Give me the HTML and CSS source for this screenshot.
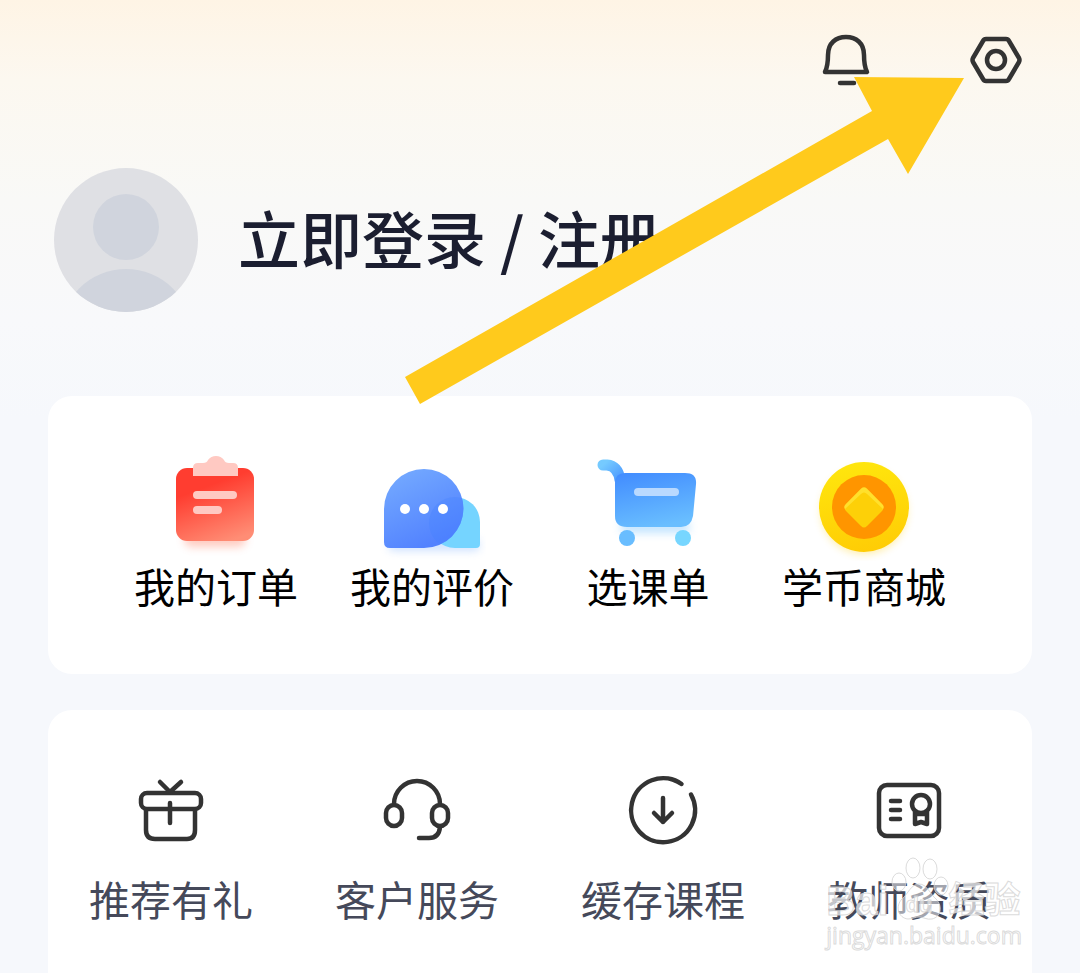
FILE: index.html
```html
<!DOCTYPE html>
<html lang="zh-CN">
  <head>
    <meta charset="utf-8">
    <meta name="viewport" content="width=device-width, initial-scale=1.0">

    <title>我的</title>

    <link rel="stylesheet" href="styles.css">
  </head>

  <body>
    <!-- Top bar -->
    <header class="top-bar">
      <button class="icon-button" type="button" aria-label="消息">
        <svg class="line-icon" width="60" height="60" viewBox="0 0 60 60">
          <path d="M9 42 Q12 36 12 25 C12 13 20 7 30 7 S48 13 48 25 Q48 36 51 42 Z"/>
          <path d="M24 53 H38"/>
        </svg>
      </button>
      <button class="icon-button" type="button" aria-label="设置">
        <svg class="line-icon" width="60" height="60" viewBox="0 0 60 60">
          <path d="M20 9 H40 Q42 9 43 11 L53 28 Q54 30 53 32 L43 49 Q42 51 40 51 H20 Q18 51 17 49 L7 32 Q6 30 7 28 L17 11 Q18 9 20 9 Z"/>
          <circle cx="30" cy="30" r="9"/>
        </svg>
      </button>
    </header>

    <!-- Login -->
    <a class="profile" href="#">
      <svg class="avatar" width="144" height="144" viewBox="0 0 144 144">
        <defs>
          <clipPath id="avatarClip"><circle cx="72" cy="72" r="72"/></clipPath>
        </defs>
        <g clip-path="url(#avatarClip)">
          <rect width="144" height="144" fill="#dfe0e4"/>
          <circle cx="72" cy="59" r="33" fill="#d0d4dd"/>
          <circle cx="72" cy="167" r="66" fill="#d0d4dd"/>
        </g>
      </svg>
      <span class="login-text">立即登录 / 注册</span>
    </a>

    <main class="cards">
      <!-- Orders, reviews, cart, coins -->
      <nav class="card main-menu">
        <a class="menu-item" href="#">
          <svg width="108" height="108" viewBox="0 0 108 108">
            <defs>
              <linearGradient id="red" x1="0.3" y1="0" x2="0.7" y2="1">
                <stop offset="0.25" stop-color="#ff3d30"/>
                <stop offset="1" stop-color="#ff8d75"/>
              </linearGradient>
              <filter id="soft" x="-20%" y="-100%" width="140%" height="300%">
                <feGaussianBlur stdDeviation="4"/>
              </filter>
            </defs>
            <rect x="22" y="78" width="62" height="16" rx="8" fill="#ff8d75" opacity="0.45" filter="url(#soft)"/>
            <rect x="14" y="15" width="78" height="73" rx="11" fill="url(#red)"/>
            <path d="M31 23 V15 Q31 10 36 10 H41 Q45 10 46 7 Q49 3 54 3 T62 7 Q63 10 67 10 H71 Q76 10 76 15 V23 Z" fill="#ffc9c2"/>
            <rect x="31" y="38" width="44" height="8" rx="4" fill="#ffc9c2"/>
            <rect x="31" y="53" width="29" height="8" rx="4" fill="#ffc9c2"/>
          </svg>
          <span class="menu-label">我的订单</span>
        </a>
        <a class="menu-item" href="#">
          <svg width="108" height="108" viewBox="0 0 108 108">
            <defs>
              <linearGradient id="blue" x1="0" y1="0" x2="0.5" y2="1">
                <stop offset="0" stop-color="#77adff"/>
                <stop offset="1" stop-color="#5282ff"/>
              </linearGradient>
              <clipPath id="bubbleClip">
                <path d="M46 16 A39.5 39.5 0 0 1 46 95 H12 Q6 95 6 89 V56 A40 40 0 0 1 46 16 Z"/>
              </clipPath>
            </defs>
            <rect x="10" y="86" width="92" height="12" rx="6" fill="#77adff" opacity="0.35" filter="url(#soft)"/>
            <path d="M77 44 A25 25 0 0 1 102 69 V91 Q102 95 98 95 H77 A25 25 0 0 1 77 44 Z" fill="#75d4ff"/>
            <path d="M46 16 A39.5 39.5 0 0 1 46 95 H12 Q6 95 6 89 V56 A40 40 0 0 1 46 16 Z" fill="url(#blue)"/>
            <circle cx="77" cy="70" r="26" fill="#4380ff" opacity="0.3" clip-path="url(#bubbleClip)"/>
            <circle cx="27" cy="56" r="5" fill="#fff"/>
            <circle cx="46" cy="56" r="5" fill="#fff"/>
            <circle cx="65" cy="56" r="5" fill="#fff"/>
          </svg>
          <span class="menu-label">我的评价</span>
        </a>
        <a class="menu-item" href="#">
          <svg width="108" height="108" viewBox="0 0 108 108">
            <defs>
              <linearGradient id="cart" x1="0.2" y1="0" x2="0.5" y2="1">
                <stop offset="0" stop-color="#438eff"/>
                <stop offset="1" stop-color="#69beff"/>
              </linearGradient>
              <linearGradient id="handle" x1="0" y1="0" x2="1" y2="1">
                <stop offset="0" stop-color="#75caff"/>
                <stop offset="1" stop-color="#4b98ff"/>
              </linearGradient>
            </defs>
            <rect x="26" y="68" width="70" height="12" rx="6" fill="#69beff" opacity="0.4" filter="url(#soft)"/>
            <path d="M9 12 H13 Q24 13 26 27" fill="none" stroke="url(#handle)" stroke-width="11" stroke-linecap="round"/>
            <path d="M31 20 H91 Q103 20 102 31 L99 63 Q97 74 87 74 H33 Q21 74 21 63 V30 Q21 20 31 20 Z" fill="url(#cart)"/>
            <rect x="40" y="35" width="45" height="8" rx="4" fill="#b9d9ff"/>
            <circle cx="33" cy="85" r="8" fill="#69bdff"/>
            <circle cx="89" cy="85" r="8" fill="#77d6ff"/>
          </svg>
          <span class="menu-label">选课单</span>
        </a>
        <a class="menu-item" href="#">
          <svg width="108" height="108" viewBox="0 0 108 108">
            <defs>
              <linearGradient id="gold" x1="0.4" y1="0" x2="0.6" y2="1">
                <stop offset="0" stop-color="#ffe60d"/>
                <stop offset="1" stop-color="#ffcc05"/>
              </linearGradient>
            </defs>
            <circle cx="54" cy="58" r="43" fill="#ffcc05" opacity="0.35" filter="url(#soft)"/>
            <circle cx="54" cy="54" r="45" fill="url(#gold)"/>
            <circle cx="54" cy="54" r="32" fill="#ff9500"/>
            <rect x="39" y="39" width="30" height="30" rx="4" fill="#ffe02c" transform="rotate(45 54 54)"/>
            <path d="M35 56 L51 41 Q54 38 57 41 L73 56 Q73 57 72 58 L57 73 Q54 76 51 73 L36 58 Q35 57 35 56 Z" fill="#fdd008"/>
          </svg>
          <span class="menu-label">学币商城</span>
        </a>
      </nav>

      <!-- Services -->
      <nav class="card service-menu">
        <a class="service-item" href="#">
          <svg class="line-icon" width="72" height="72" viewBox="0 0 72 72">
            <rect x="6" y="19" width="60" height="16" rx="6"/>
            <path d="M11 36 V56 Q11 65 20 65 H52 Q60 65 60 56 V36"/>
            <path d="M35 29 V49 M25 8 L35 18 L46 8"/>
          </svg>
          <span class="service-label">推荐有礼</span>
        </a>
        <a class="service-item" href="#">
          <svg class="line-icon" width="72" height="72" viewBox="0 0 72 72">
            <rect x="5" y="31" width="16" height="21" rx="8"/>
            <rect x="51" y="31" width="16" height="21" rx="8"/>
            <path d="M13 30 A23 23 0 0 1 59 30"/>
            <path d="M59 53 Q58 64 48 64 H38"/>
          </svg>
          <span class="service-label">客户服务</span>
        </a>
        <a class="service-item" href="#">
          <svg class="line-icon" width="72" height="72" viewBox="0 0 72 72">
            <path d="M54.5 10 A32 32 0 1 0 64 20.5"/>
            <path d="M36 24 V48 M27 39 L36 48 L45 39"/>
          </svg>
          <span class="service-label">缓存课程</span>
        </a>
        <a class="service-item" href="#">
          <svg class="line-icon" width="72" height="72" viewBox="0 0 72 72">
            <rect x="6" y="11" width="60" height="51" rx="8"/>
            <path d="M18 27 H27 M18 36 H27 M18 45 H27"/>
            <circle cx="48" cy="30" r="9"/>
            <path d="M42 38 V50 L48 48 L54 50 V38"/>
            <path d="M43 40 H53"/>
          </svg>
          <span class="service-label">教师资质</span>
        </a>
      </nav>
    </main>

    <!-- Arrow pointing at the settings button -->
    <svg class="arrow" width="560" height="328" viewBox="0 0 560 328" aria-hidden="true">
      <path d="M0 300 L467 34 L449 0 L559 1 L503 97 L483 62 L15 327 Z" fill="#ffca1c"/>
    </svg>

    <div class="watermark">
      <div class="watermark-brand">
        <span>Bai</span>
        <svg class="paw" width="60" height="64" viewBox="0 0 60 64">
          <ellipse cx="24" cy="11" rx="7" ry="10"/>
          <ellipse cx="41" cy="12" rx="7" ry="10"/>
          <ellipse cx="10" cy="25" rx="7" ry="9"/>
          <ellipse cx="52" cy="29" rx="7" ry="9"/>
          <path d="M30 27 C22 27 19 37 13 42 C6 49 9 61 19 62 C24 62 26 60 30 60 S38 63 43 62 C52 60 54 49 47 42 C41 37 38 27 30 27 Z"/>
          <text x="30" y="55" text-anchor="middle">du</text>
        </svg>
        <span>经验</span>
      </div>
      <div class="watermark-url">jingyan.baidu.com</div>
    </div>
  </body>
</html>
```
FILE: styles.css
```css
* {
  box-sizing: border-box;
}
body {
  position: relative;
  display: flex;
  flex-direction: column;
  min-height: 100vh;
  margin: 0;
  overflow-x: hidden;
  font-family: "Noto Sans CJK SC", sans-serif;
  background: linear-gradient(#fef4e5 0, #fcf8f0 80px, #f9f9f7 200px, #f8f9fb 320px, #f6f8fc 420px);
}
a {
  color: inherit;
  text-decoration: none;
}
svg {
  display: block;
}
/* Outline icons share one stroke */
.line-icon {
  fill: none;
  stroke: #333;
  stroke-width: 4.5;
  stroke-linecap: round;
  stroke-linejoin: round;
}
.top-bar {
  display: flex;
  justify-content: flex-end;
  gap: 90px;
  padding: 30px 54px 0;
}
.icon-button {
  padding: 0;
  border: none;
  background: none;
  cursor: pointer;
}
.profile {
  display: flex;
  align-items: center;
  gap: 40px;
  margin: 78px 54px 84px;
}
.avatar {
  flex: none;
}
.login-text {
  padding-bottom: 6px;
  font-size: 62px;
  font-weight: 500;
  line-height: 80px;
  color: #1b1e30;
}
.cards {
  display: flex;
  flex: 1;
  flex-direction: column;
  gap: 36px;
  padding: 0 48px;
}
.card {
  display: grid;
  grid-template-columns: repeat(4, 1fr);
  border-radius: 24px;
  background: #fff;
}
.main-menu {
  padding: 57px 60px 65px;
}
.menu-item,
.service-item {
  display: flex;
  flex-direction: column;
  align-items: center;
}
.menu-label,
.service-label {
  font-size: 41px;
  line-height: 48px;
  white-space: nowrap;
}
.menu-label {
  color: #000;
}
/* Runs on past the bottom of the screen */
.service-menu {
  flex: 1;
  padding: 64px 0 40px;
  border-radius: 24px 24px 0 0;
}
.service-item {
  gap: 28px;
}
.service-label {
  color: #45495a;
}
.arrow {
  position: absolute;
  top: 77px;
  right: 115px;
  pointer-events: none;
}
/* Watermark in the bottom right corner */
.watermark {
  position: absolute;
  top: 857px;
  right: 58px;
  color: rgba(255, 255, 255, 0.7);
  -webkit-text-stroke: 1px rgba(210, 210, 210, 0.8);
  pointer-events: none;
}
.watermark-brand {
  display: flex;
  align-items: flex-end;
  height: 64px;
  font-family: "Liberation Sans", "Noto Sans CJK SC", sans-serif;
  font-size: 36px;
  font-weight: 700;
  line-height: 40px;
}
.watermark-brand span:first-child {
  font-size: 40px;
}
.paw {
  flex: none;
  fill: rgba(255, 255, 255, 0.5);
  stroke: rgba(210, 210, 210, 0.8);
}
.paw text {
  font-size: 22px;
}
.watermark-url {
  font-family: "Open Sans", sans-serif;
  font-size: 23px;
  line-height: 28px;
}
```
